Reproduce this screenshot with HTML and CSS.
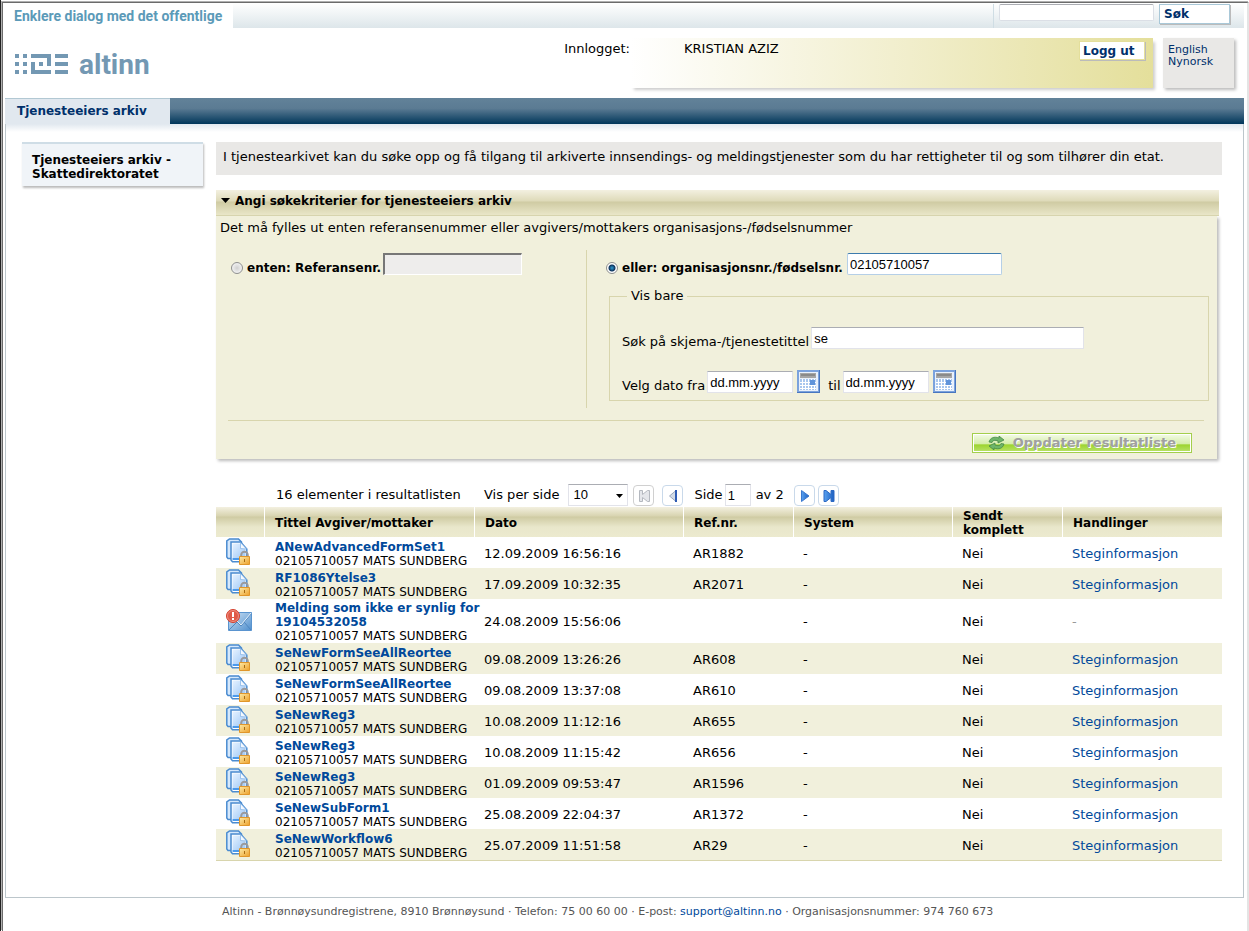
FILE: index.html
```html
<!DOCTYPE html>
<html lang="no">
<head>
<meta charset="utf-8">
<title>Altinn - Tjenesteeiers arkiv</title>
<link rel="stylesheet" href="styles.css">
</head>
<body>
<svg class="defs" aria-hidden="true">
  <defs>
    <linearGradient id="paper" x1="0" y1="0" x2="1" y2="1"><stop offset="0" stop-color="#e6f2ff"/><stop offset="1" stop-color="#9cc7f7"/></linearGradient>
    <linearGradient id="gold" x1="0" y1="0" x2="1" y2="1"><stop offset="0" stop-color="#fdeaa6"/><stop offset="1" stop-color="#eda02a"/></linearGradient>
    <linearGradient id="env" x1="0" y1="0" x2="1" y2="1"><stop offset="0" stop-color="#d3e5f5"/><stop offset="1" stop-color="#4f8fce"/></linearGradient>
    <linearGradient id="blue" x1="0" y1="0" x2="1" y2="0"><stop offset="0" stop-color="#5aa2f0"/><stop offset="1" stop-color="#1c5fc0"/></linearGradient>
    <symbol id="doc" viewBox="0 0 24 28">
      <path d="M3.500 1h9l3 3v16.500H2L.8 19V3z" fill="#d5e8fc" stroke="#4a8bd0" stroke-width="1.500"/>
      <path d="M5 4h9.500l6.300 7v12.800H6.500L5 22z" fill="#fff" stroke="#4a8bd0" stroke-width="1.500"/>
      <path d="M6.500 5.500h7.500l5.500 6V20h-13z" fill="url(#paper)"/>
      <path d="M14.500 4.500v6l6 .5z" fill="#f4f9ff" stroke="#7fb0e4" stroke-width=".7"/>
      <path d="M6.500 20h7v2h-7z" fill="#4b9aec"/>
      <path d="M15.200 19v-2a3.300 3.300 0 0 1 6.600 0v2" fill="none" stroke="#9a9a9c" stroke-width="2"/>
      <path d="M13.500 18.500h10v8h-10z" fill="url(#gold)" stroke="#e0962a"/>
      <path d="M18 21h1v3h-1z" fill="#a86c12"/>
    </symbol>
    <symbol id="mail" viewBox="0 0 26 22">
      <path d="M2.500 3.500h23v18h-23z" fill="url(#env)" stroke="#5a94cf"/>
      <path d="M3 21l8-8M25 21l-7-8M11 13l4 4 10-12" fill="none" stroke="#4f86c0"/>
      <path d="M11 12l4 4L25 4" fill="none" stroke="#e6f1fa"/>
      <circle cx="7" cy="7" r="6.500" fill="#e05a48" stroke="#d4402e"/>
      <circle cx="7" cy="7" r="5.500" fill="none" stroke="#f2a598" stroke-width=".7"/>
      <path d="M6 3h2v5H6zM6 9h2v2H6z" fill="#fff"/>
    </symbol>
    <symbol id="calendar" viewBox="0 0 23 23">
      <path d="M0 0h23v23H0z" fill="#4876c0"/>
      <path d="M0 0h22v22H0z" fill="#7ba2dd"/>
      <path d="M2 2h19v19H2z" fill="#e9f1fc"/>
      <path d="M3 3h16v5H3z" fill="#a6a6a6"/><path d="M4 4h14v2H4z" fill="#8a8a8a"/>
      <path d="M3 9h16v11H3z" fill="#a8c6ee"/>
      <path d="M5.500 9v11M8.500 9v11M11.500 9v11M14.500 9v11M17.500 9v11M3 12.500h16M3 15.500h16M3 18.500h16" stroke="#fff"/>
      <path d="M13 10h5v5h-5z" fill="#5f93da"/>
    </symbol>
  </defs>
</svg>
<div class="window">
  <header>
    <div class="topbar">
      <div class="slogan">Enklere dialog med det offentlige</div>
      <form class="site-search">
        <input type="text" class="search-box" aria-label="Søketekst">
        <button type="button" class="btn btn-search">Søk</button>
      </form>
    </div>
    <div class="masthead">
      <div class="logo">
        <svg width="54" height="20" viewBox="0 0 54 20" fill="#7398b3" aria-hidden="true">
          <path d="M0 0h4v4H0zM8 0h4v4H8zM0 8h4v4H0zM8 8h4v4H8zM0 16h4v4H0zM8 16h4v4H8z"/>
          <path d="M16 0h20v12h-4V4H16zM16 8h4v8h16v4H16zM24 8h4v4h-4zM40 0h13v4H40zM40 8h13v4H40zM40 16h13v4H40z"/>
        </svg>
        <span>altinn</span>
      </div>
      <div class="session">
        <span class="session-label">Innlogget:</span>
        <div class="session-box">
          <span>KRISTIAN AZIZ</span>
          <button type="button" class="btn btn-logout">Logg ut</button>
        </div>
      </div>
      <div class="languages"><a href="#">English</a><a href="#">Nynorsk</a></div>
    </div>
    <nav class="tabs"><a href="#">Tjenesteeiers arkiv</a></nav>
  </header>
  <main>
    <aside><a href="#">Tjenesteeiers arkiv - Skattedirektoratet</a></aside>
    <div class="content">
      <p class="intro">I tjenestearkivet kan du søke opp og få tilgang til arkiverte innsendings- og meldingstjenester som du har rettigheter til og som tilhører din etat.</p>
      <section class="criteria">
        <h2><svg width="10" height="6" viewBox="0 0 10 6" aria-hidden="true"><path d="M0 0h9L4.500 5z"/></svg>Angi søkekriterier for tjenesteeiers arkiv</h2>
        <form class="criteria-body">
          <p>Det må fylles ut enten referansenummer eller avgivers/mottakers organisasjons-/fødselsnummer</p>
          <div class="choices">
            <div class="choice-ref">
              <input type="radio" name="mode" id="mode-ref"><label for="mode-ref">enten: Referansenr.</label>
              <input type="text" class="field field-ref" aria-label="Referansenr." disabled>
            </div>
            <div class="choice-org">
              <div class="line">
                <input type="radio" name="mode" id="mode-org" checked><label for="mode-org">eller: organisasjonsnr./fødselsnr.</label>
                <input type="text" class="field field-org" aria-label="Organisasjonsnr./fødselsnr." value="02105710057">
              </div>
              <fieldset>
                <legend>Vis bare</legend>
                <div class="line line-title">
                  <label for="title">Søk på skjema-/tjenestetittel</label>
                  <input type="text" class="field field-title" id="title" value="se">
                </div>
                <div class="line">
                  <label for="from">Velg dato fra</label>
                  <input type="text" class="field field-date" id="from" value="dd.mm.yyyy">
                  <button type="button" class="cal" aria-label="Velg fra-dato"><svg width="23" height="23"><use href="#calendar"/></svg></button>
                  <label class="til" for="to">til</label>
                  <input type="text" class="field field-date" id="to" value="dd.mm.yyyy">
                  <button type="button" class="cal" aria-label="Velg til-dato"><svg width="23" height="23"><use href="#calendar"/></svg></button>
                </div>
              </fieldset>
            </div>
          </div>
          <div class="actions">
            <button type="button" class="btn-update" disabled>
              <svg width="17" height="14" viewBox="0 0 17 14" aria-hidden="true"><path d="M1 6C2 2 6 0 11 2V0l5 4-6 3V5C7 4 5 4 4 6.500z" fill="#6fb56a" stroke="#3c8040" stroke-width=".7"/><path d="M16 8c-1 4-5 6-10 4v2L1 10l6-3v2c3 1 5 1 6-1.500z" fill="#6fb56a" stroke="#3c8040" stroke-width=".7"/></svg>
              Oppdater resultatliste
            </button>
          </div>
        </form>
      </section>
      <section class="results">
        <div class="pager">
          <span class="count">16 elementer i resultatlisten</span>
          <label for="per-page">Vis per side</label>
          <span class="select"><select id="per-page"><option>10</option></select><svg width="8" height="4" viewBox="0 0 8 4" aria-hidden="true"><path d="M0 0h7L3.500 4z"/></svg></span>
          <button type="button" class="page-btn off first" aria-label="Første side"><svg width="19" height="19"><path d="M5.500 4.500h3v4l5-4h2v11h-2l-5-4v4h-3z" fill="#e4e6ea" stroke="#b4b8bf"/></svg></button>
          <button type="button" class="page-btn prev" aria-label="Forrige side"><svg width="19" height="19"><path d="M6.500 10l6.500-5.500v11z" fill="#d3dbe6" stroke="#9aa9bd"/><path d="M12 4h2v12h-2z" fill="#2f5cb4"/></svg></button>
          <label for="page">Side</label>
          <input type="text" class="field field-page" id="page" value="1">
          <span class="of">av 2</span>
          <button type="button" class="page-btn next" aria-label="Neste side"><svg width="19" height="19"><path d="M6.500 4.500v11l7.500-5.500z" fill="url(#blue)" stroke="#3a78cf"/></svg></button>
          <button type="button" class="page-btn last" aria-label="Siste side"><svg width="19" height="19"><path d="M5 4.500h2l5 4v-4h3v11h-3v-4l-5 4H5z" fill="url(#blue)" stroke="#2c69c4"/></svg></button>
        </div>
        <table>
          <colgroup><col class="c-icon"><col class="c-title"><col class="c-date"><col class="c-ref"><col class="c-sys"><col class="c-sent"><col></colgroup>
          <thead><tr><th></th><th>Tittel Avgiver/mottaker</th><th>Dato</th><th>Ref.nr.</th><th>System</th><th>Sendt komplett</th><th>Handlinger</th></tr></thead>
          <tbody>
            <tr><td><svg width="24" height="28"><use href="#doc"/></svg></td><td><a href="#">ANewAdvancedFormSet1</a>02105710057 MATS SUNDBERG</td><td>12.09.2009 16:56:16</td><td>AR1882</td><td>-</td><td>Nei</td><td><a href="#">Steginformasjon</a></td></tr>
            <tr><td><svg width="24" height="28"><use href="#doc"/></svg></td><td><a href="#">RF1086Ytelse3</a>02105710057 MATS SUNDBERG</td><td>17.09.2009 10:32:35</td><td>AR2071</td><td>-</td><td>Nei</td><td><a href="#">Steginformasjon</a></td></tr>
            <tr><td><svg width="26" height="22"><use href="#mail"/></svg></td><td><a href="#">Melding som ikke er synlig for<br>19104532058</a>02105710057 MATS SUNDBERG</td><td>24.08.2009 15:56:06</td><td></td><td>-</td><td>Nei</td><td class="muted">-</td></tr>
            <tr><td><svg width="24" height="28"><use href="#doc"/></svg></td><td><a href="#">SeNewFormSeeAllReortee</a>02105710057 MATS SUNDBERG</td><td>09.08.2009 13:26:26</td><td>AR608</td><td>-</td><td>Nei</td><td><a href="#">Steginformasjon</a></td></tr>
            <tr><td><svg width="24" height="28"><use href="#doc"/></svg></td><td><a href="#">SeNewFormSeeAllReortee</a>02105710057 MATS SUNDBERG</td><td>09.08.2009 13:37:08</td><td>AR610</td><td>-</td><td>Nei</td><td><a href="#">Steginformasjon</a></td></tr>
            <tr><td><svg width="24" height="28"><use href="#doc"/></svg></td><td><a href="#">SeNewReg3</a>02105710057 MATS SUNDBERG</td><td>10.08.2009 11:12:16</td><td>AR655</td><td>-</td><td>Nei</td><td><a href="#">Steginformasjon</a></td></tr>
            <tr><td><svg width="24" height="28"><use href="#doc"/></svg></td><td><a href="#">SeNewReg3</a>02105710057 MATS SUNDBERG</td><td>10.08.2009 11:15:42</td><td>AR656</td><td>-</td><td>Nei</td><td><a href="#">Steginformasjon</a></td></tr>
            <tr><td><svg width="24" height="28"><use href="#doc"/></svg></td><td><a href="#">SeNewReg3</a>02105710057 MATS SUNDBERG</td><td>01.09.2009 09:53:47</td><td>AR1596</td><td>-</td><td>Nei</td><td><a href="#">Steginformasjon</a></td></tr>
            <tr><td><svg width="24" height="28"><use href="#doc"/></svg></td><td><a href="#">SeNewSubForm1</a>02105710057 MATS SUNDBERG</td><td>25.08.2009 22:04:37</td><td>AR1372</td><td>-</td><td>Nei</td><td><a href="#">Steginformasjon</a></td></tr>
            <tr><td><svg width="24" height="28"><use href="#doc"/></svg></td><td><a href="#">SeNewWorkflow6</a>02105710057 MATS SUNDBERG</td><td>25.07.2009 11:51:58</td><td>AR29</td><td>-</td><td>Nei</td><td><a href="#">Steginformasjon</a></td></tr>
          </tbody>
        </table>
      </section>
    </div>
  </main>
  <footer>Altinn - Brønnøysundregistrene, 8910 Brønnøysund · Telefon: 75 00 60 00 · E-post: <a href="#">support@altinn.no</a> · Organisasjonsnummer: 974 760 673</footer>
</div>
</body>
</html>
```
FILE: styles.css
```css
* { box-sizing: border-box; }
body { display: flex; flex-direction: column; min-height: 100vh; margin: 0; border-left: 1px solid #222; background: #fff; color: #000; font: 13px/14px Verdana, "DejaVu Sans", sans-serif; }
p, h2 { margin: 0; }
a { color: #00499b; text-decoration: none; }
button, input, select { font: inherit; margin: 0; padding: 0; }
svg { display: block; }
.defs { position: absolute; width: 0; height: 0; }

.window {
  flex: 1;
  margin: 2px 0 0 1px;
  padding: 0 3px 0 2px;
  border: 1px solid #6b6b6b;
  border-right: 2px solid #e4e4e4;
  border-bottom: 0;
  box-shadow: -1px -1px #b0b0b0;
}

.topbar { display: flex; height: 25px; }
.slogan { width: 228px; padding: 5px 0 0 9px; color: #5b9ab8; font: bold 14px/16px Roboto, sans-serif; white-space: nowrap; }
.site-search { flex: 1; display: flex; justify-content: flex-end; gap: 5px; padding: 1px 14px 0 0; background: linear-gradient(#fff, #dde6ea); }
.site-search::before { content: ""; width: 1px; height: 24px; background: #cfdde4; }
.search-box { width: 155px; height: 17px; border: 1px solid #dbdfe6; border-top-color: #abadb3; border-radius: 2px; background: #fff; }
.btn { color: #00306b; font-size: 12px; font-weight: bold; background: #fff; text-align: left; }
.btn-search { width: 71px; height: 20px; padding-left: 4px; border: 1px solid #a9c8d8; box-shadow: 1px 1px #bbb; }

.masthead { display: flex; align-items: flex-start; height: 70px; padding: 10px 10px 0 10px; }
.logo { display: flex; align-items: flex-start; gap: 10px; padding-top: 16px; color: #7398b3; }
.logo span { font: bold 28px/22px Roboto, sans-serif; }
.session { display: flex; margin-left: auto; }
.session-label { padding-top: 4px; }
.session-box { display: flex; justify-content: space-between; align-items: flex-start; width: 523px; height: 50px; padding: 3px 8px 0 54px; background: linear-gradient(90deg, #fff, #f2efcf 50%, #e4df9b); box-shadow: 3px 3px 3px -1px #ccc; }
.session-box span { padding-top: 1px; }
.btn-logout { width: 66px; height: 19px; padding-left: 3px; border: 1px solid #e4df9b; box-shadow: 1px 1px #bbb; }
.languages { display: flex; flex-direction: column; width: 71px; height: 50px; margin-left: 10px; padding: 6px 5px; background: #e9e8e6; box-shadow: 2px 2px 3px #bbb; font-size: 11px; line-height: 12px; }
.languages a { color: #00306b; }

.tabs { display: flex; height: 26px; background: linear-gradient(#628299 0, #5b7b93 40%, #00365a); }
.tabs a { width: 165px; padding: 5px 0 0 12px; border-top: 1px solid #b2c8d3; background: #e1e8ef; color: #00306b; font-size: 12px; font-weight: bold; }

main { display: flex; align-items: flex-start; min-height: 774px; padding: 18px 21px 36px 16px; border: 1px solid #bcc6cb; border-top: 0; background: linear-gradient(#e1e8ef, #fff 8px); }
aside { width: 181px; margin-right: 13px; padding: 9px 20px 5px 10px; border-top: 2px solid #cfdde6; background: #f0f4f8; box-shadow: 1px 2px 2px #bbb; font-size: 12px; font-weight: bold; }
aside a { color: #000; }
.content { flex: 1; min-width: 0; }
.intro { height: 33px; padding: 8px 7px; background: #e9e8e6; white-space: nowrap; }

.criteria { margin: 15px 3px 0 0; }
.criteria h2 { display: flex; align-items: center; gap: 4px; height: 26px; padding: 0 5px 4px; border-bottom: 1px solid #d8d5ad; background: linear-gradient(#f3f0e0, #dedab9 11px, #cfcba3 12px, #e9e6c8); font-size: 12px; line-height: 14px; }
.criteria-body { margin-right: 2px; padding: 5px 8px 6px 4px; background: #f1f0dc; box-shadow: 2px 2px 3px #bbb; }
.choices { display: grid; grid-template-columns: 359px 1fr; margin: 15px 0 0 8px; padding-bottom: 12px; }
.choice-ref { display: flex; height: 158px; padding: 3px 0 0 3px; border-right: 1px solid #d8d5ad; }
.choice-org { padding-left: 22px; }
.line { display: flex; align-items: flex-end; }
.choice-org > .line { padding-top: 3px; }
.choice-ref label, .choice-org > .line label { font-size: 12px; font-weight: bold; }
.choices input[type="radio"] { appearance: none; width: 12px; height: 12px; margin: 9px 4px 0 0; flex: none; border: 1px solid #8e8f8f; border-radius: 50%; background: radial-gradient(#d0d0d0, #fff); }
.choices input[type="radio"]:checked { background: radial-gradient(#2f9fd6 0, #10335c 3px, #fff 4px); }
.choice-org input[type="radio"] { margin-left: -3px; margin-bottom: 1px; }
.choice-ref label { padding-top: 8px; }
.field { height: 22px; padding: 0 2px; border: 1px solid #e2e3ea; border-top-color: #abadb3; background: #fff; font-family: Arial, "Liberation Sans", sans-serif; }
.field-ref { width: 139px; margin-left: 2px; border: 1px solid #fff; border-top: 2px solid #777; border-left: 2px solid #777; background: #eeedec; }
.field-org { width: 155px; margin-left: 4px; border: 1px solid #b5cfe7; border-top-color: #3d7bad; border-radius: 2px; }
fieldset { height: 112px; margin: 14px 0 0; padding: 24px 12px 0; border: 1px solid #d8d5ad; }
legend { margin-left: 5px; padding: 0 4px; }
.line-title { margin-bottom: 21px; }
.field-title { width: 273px; margin-left: 2px; }
.field-date { width: 86px; margin-left: 2px; }
.cal { margin-left: 4px; border: 0; background: none; }
.til { margin-left: 8px; }
.actions { display: flex; justify-content: flex-end; margin: 0 5px 0 8px; padding: 12px 12px 0 0; border-top: 1px solid #d8d5ad; }
.btn-update { display: flex; align-items: center; gap: 8px; height: 20px; padding: 0 15px; border: 1px solid #a3cf4c; outline: 1px solid #fff; outline-offset: -2px; background: linear-gradient(#f4fbe8, #d5edaa 55%, #9cd42f 60%, #b9e36a); color: #a0a0a0; font-weight: bold; text-shadow: 1px 1px #fff; }

.pager { display: flex; align-items: center; height: 22px; margin: 25px 0 1px; padding-left: 60px; }
.count { width: 208px; }
.select { position: relative; margin-left: 8px; }
.select select { display: block; appearance: none; width: 60px; height: 22px; padding-left: 5px; border: 1px solid #e2e3ea; border-top-color: #abadb3; border-radius: 0; background: #fff; color: #000; font-family: Arial, "Liberation Sans", sans-serif; }
.select svg { position: absolute; top: 10px; right: 4px; pointer-events: none; }
.page-btn { width: 21px; height: 21px; border: 1px solid #c9d9ea; border-radius: 4px; background: #fff; }
.page-btn.off { border-color: #d0d0d0; }
.first { margin: 0 8px 0 5px; }
.prev { margin-right: 12px; }
.field-page { width: 26px; margin: 0 5px 0 2px; }
.next { margin-left: 10px; }
.last { margin-left: 3px; }

table { width: 100%; border-collapse: separate; border-spacing: 0; table-layout: fixed; border-bottom: 1px solid #d8d5ad; }
.c-icon { width: 48px; }
.c-title { width: 210px; }
.c-date { width: 209px; }
.c-ref { width: 110px; }
.c-sys { width: 159px; }
.c-sent { width: 110px; }
th { height: 30px; padding: 2px 10px 0; border-left: 1px solid #fff; background: linear-gradient(#f3f0e0, #d8d4b0 9px, #cfcba3 10px, #e9e7cb 20px, #eceacf); font-size: 12px; text-align: left; }
th:first-child { border-left: 0; }
td { height: 31px; padding: 2px 0 0 10px; white-space: nowrap; }
td:first-child { padding: 0 0 2px 10px; }
td:nth-child(2) { padding-left: 11px; font-size: 12px; }
td:nth-child(2) a { display: block; font-weight: bold; }
tbody tr:nth-child(even) { background: #f1f0dc; }
.muted { color: #999; }

footer { padding: 8px 0 0 217px; color: #555; font-size: 11px; line-height: 12px; }
```
